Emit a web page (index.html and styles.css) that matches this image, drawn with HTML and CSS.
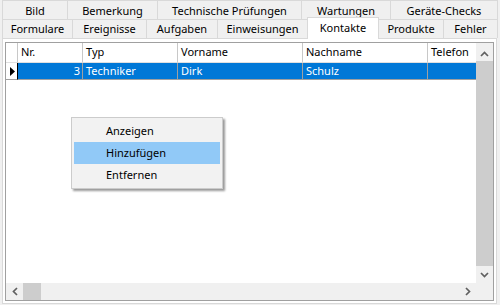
FILE: index.html
```html
<!DOCTYPE html>
<html>
<head>
<meta charset="utf-8">
<link rel="stylesheet" href="styles.css">
</head>
<body>
<div class="ctl">
  <div class="tabrow r1">
    <div class="tab w65">Bild</div>
    <div class="tab w90">Bemerkung</div>
    <div class="tab w144">Technische Prüfungen</div>
    <div class="tab w89">Wartungen</div>
    <div class="tab w108 last">Geräte-Checks</div>
  </div>
  <div class="tabrow r2">
    <div class="tab w70">Formulare</div>
    <div class="tab w74">Ereignisse</div>
    <div class="tab w71">Aufgaben</div>
    <div class="tab w90">Einweisungen</div>
    <div class="tab w71 sel">Kontakte</div>
    <div class="tab w65">Produkte</div>
    <div class="tab w55 last">Fehler</div>
  </div>
  <div class="page">
    <div class="grid">
      <div class="main">
        <div class="cols">
          <div class="row hdr">
            <div class="c rh"></div>
            <div class="c cnr">Nr.</div>
            <div class="c ctyp">Typ</div>
            <div class="c cvn">Vorname</div>
            <div class="c cnn">Nachname</div>
            <div class="c ctel">Telefon</div>
          </div>
          <div class="row dat">
            <div class="c rh cur"><svg width="5" height="9" viewBox="0 0 5 9"><path d="M0 0 L5 4.5 L0 9 Z" fill="#000"/></svg></div>
            <div class="c cnr num">3</div>
            <div class="c ctyp">Techniker</div>
            <div class="c cvn">Dirk</div>
            <div class="c cnn">Schulz</div>
            <div class="c ctel"></div>
          </div>
        </div>
        <div class="vscroll">
          <div class="arr up"><svg width="9" height="6" viewBox="0 0 9 6"><path d="M1 5 L4.5 1.5 L8 5" fill="none" stroke="#606060" stroke-width="1.7"/></svg></div>
          <div class="vthumb"></div>
          <div class="arr down"><svg width="9" height="6" viewBox="0 0 9 6"><path d="M1 1 L4.5 4.5 L8 1" fill="none" stroke="#606060" stroke-width="1.7"/></svg></div>
        </div>
      </div>
      <div class="hscroll">
        <div class="harr"><svg width="6" height="9" viewBox="0 0 6 9"><path d="M5 1 L1.5 4.5 L5 8" fill="none" stroke="#606060" stroke-width="1.7"/></svg></div>
        <div class="hthumb"></div>
        <div class="htrack"></div>
        <div class="harr"><svg width="6" height="9" viewBox="0 0 6 9"><path d="M1 1 L4.5 4.5 L1 8" fill="none" stroke="#606060" stroke-width="1.7"/></svg></div>
        <div class="corner"></div>
      </div>
    </div>
  </div>
</div>
<div class="menu">
  <div class="item">Anzeigen</div>
  <div class="item hot">Hinzufügen</div>
  <div class="item">Entfernen</div>
</div>
</body>
</html>
```

FILE: styles.css
```css
* { box-sizing: border-box; }
html, body { margin: 0; padding: 0; }
body {
  width: 500px;
  height: 305px;
  overflow: hidden;
  background: #f0f0f0;
  font-family: "Noto Sans", "Open Sans", sans-serif;
  font-size: 11px;
  color: #000;
  position: relative;
}
.ctl { padding-left: 2px; }
.tabrow { display: flex; height: 19px; }
.tab {
  height: 19px;
  border: 1px solid #d9d9d9;
  border-bottom: none;
  border-right: none;
  background: #f0f0f0;
  text-align: center;
  line-height: 15px;
  white-space: nowrap;
}
.tab.last { border-right: 1px solid #d9d9d9; }
.r1 .tab { padding-top: 2px; }
.r2 .tab { padding-top: 1px; }
.r2 .tab.sel {
  position: relative;
  z-index: 2;
  background: #fff;
  height: 22px;
  margin-top: -2px;
  margin-right: -1px;
  border-right: 1px solid #d9d9d9;
  padding-top: 2px;
  width: 72px;
}
.w55 { width: 55px; } .w65 { width: 65px; } .w70 { width: 70px; }
.w71 { width: 71px; } .w74 { width: 74px; } .w89 { width: 89px; }
.w90 { width: 90px; } .w108 { width: 108px; } .w144 { width: 144px; }

.page {
  width: 495px;
  height: 266px;
  border: 1px solid #d9d9d9;
  background: #fff;
  padding: 3px 2px 2px 2px;
}
.grid {
  width: 489px;
  height: 259px;
  border: 1px solid #a0a0a0;
  display: flex;
  flex-direction: column;
  background: #fff;
}
.main { display: flex; height: 240px; }
.cols { flex: 1; overflow: hidden; background: #fff; }
.row { display: flex; }
.c {
  border-right: 1px solid #a0a0a0;
  padding-left: 3px;
  white-space: nowrap;
  overflow: hidden;
  line-height: 15px;
}
.hdr { height: 20px; }
.hdr .c { border-bottom: 1px solid #e0e0e0; padding-top: 1px; background: #fff; }
.hdr .c { border-right-color: #c8c8c8; }
.dat { height: 17px; }
.dat .c { background: #0078d7; color: #fff; border-bottom: 1px solid #a0a0a0; border-right-color: #a0a0a0; }
.dat .c.rh { background: #fff; border-right: 1px solid #000; border-bottom-color: #a0a0a0; display: flex; align-items: center; justify-content: center; padding: 0 0 0 1px; }
.rh { width: 12px; padding: 0; }
.cnr { width: 65px; }
.num { text-align: right; padding-right: 2px; }
.ctyp { width: 95px; }
.cvn { width: 125px; }
.cnn { width: 125px; }
.ctel { flex: 1; border-right: none !important; }

.vscroll { width: 17px; display: flex; flex-direction: column; background: #f0f0f0; }
.arr { display: flex; justify-content: center; }
.arr.up { height: 18px; align-items: center; padding-top: 4px; }
.vthumb { height: 205px; background: #cdcdcd; }
.arr.down { height: 17px; align-items: center; padding-top: 1px; }

.hscroll { height: 17px; display: flex; background: #f0f0f0; }
.harr { width: 17px; display: flex; align-items: center; justify-content: center; }
.hthumb { width: 18px; background: #cdcdcd; }
.htrack { flex: 1; }
.corner { width: 17px; background: #f0f0f0; }

.menu {
  position: absolute;
  left: 71px;
  top: 117px;
  width: 152px;
  height: 72px;
  background: #f2f2f2;
  border: 1px solid #cccccc;
  box-shadow: 2px 2px 2px rgba(0,0,0,0.4);
  padding: 2px 1px;
}
.item {
  height: 22px;
  line-height: 22px;
  padding-left: 32px;
  margin: 0 1px;
}
.item.hot { background: #91c9f7; }
```
